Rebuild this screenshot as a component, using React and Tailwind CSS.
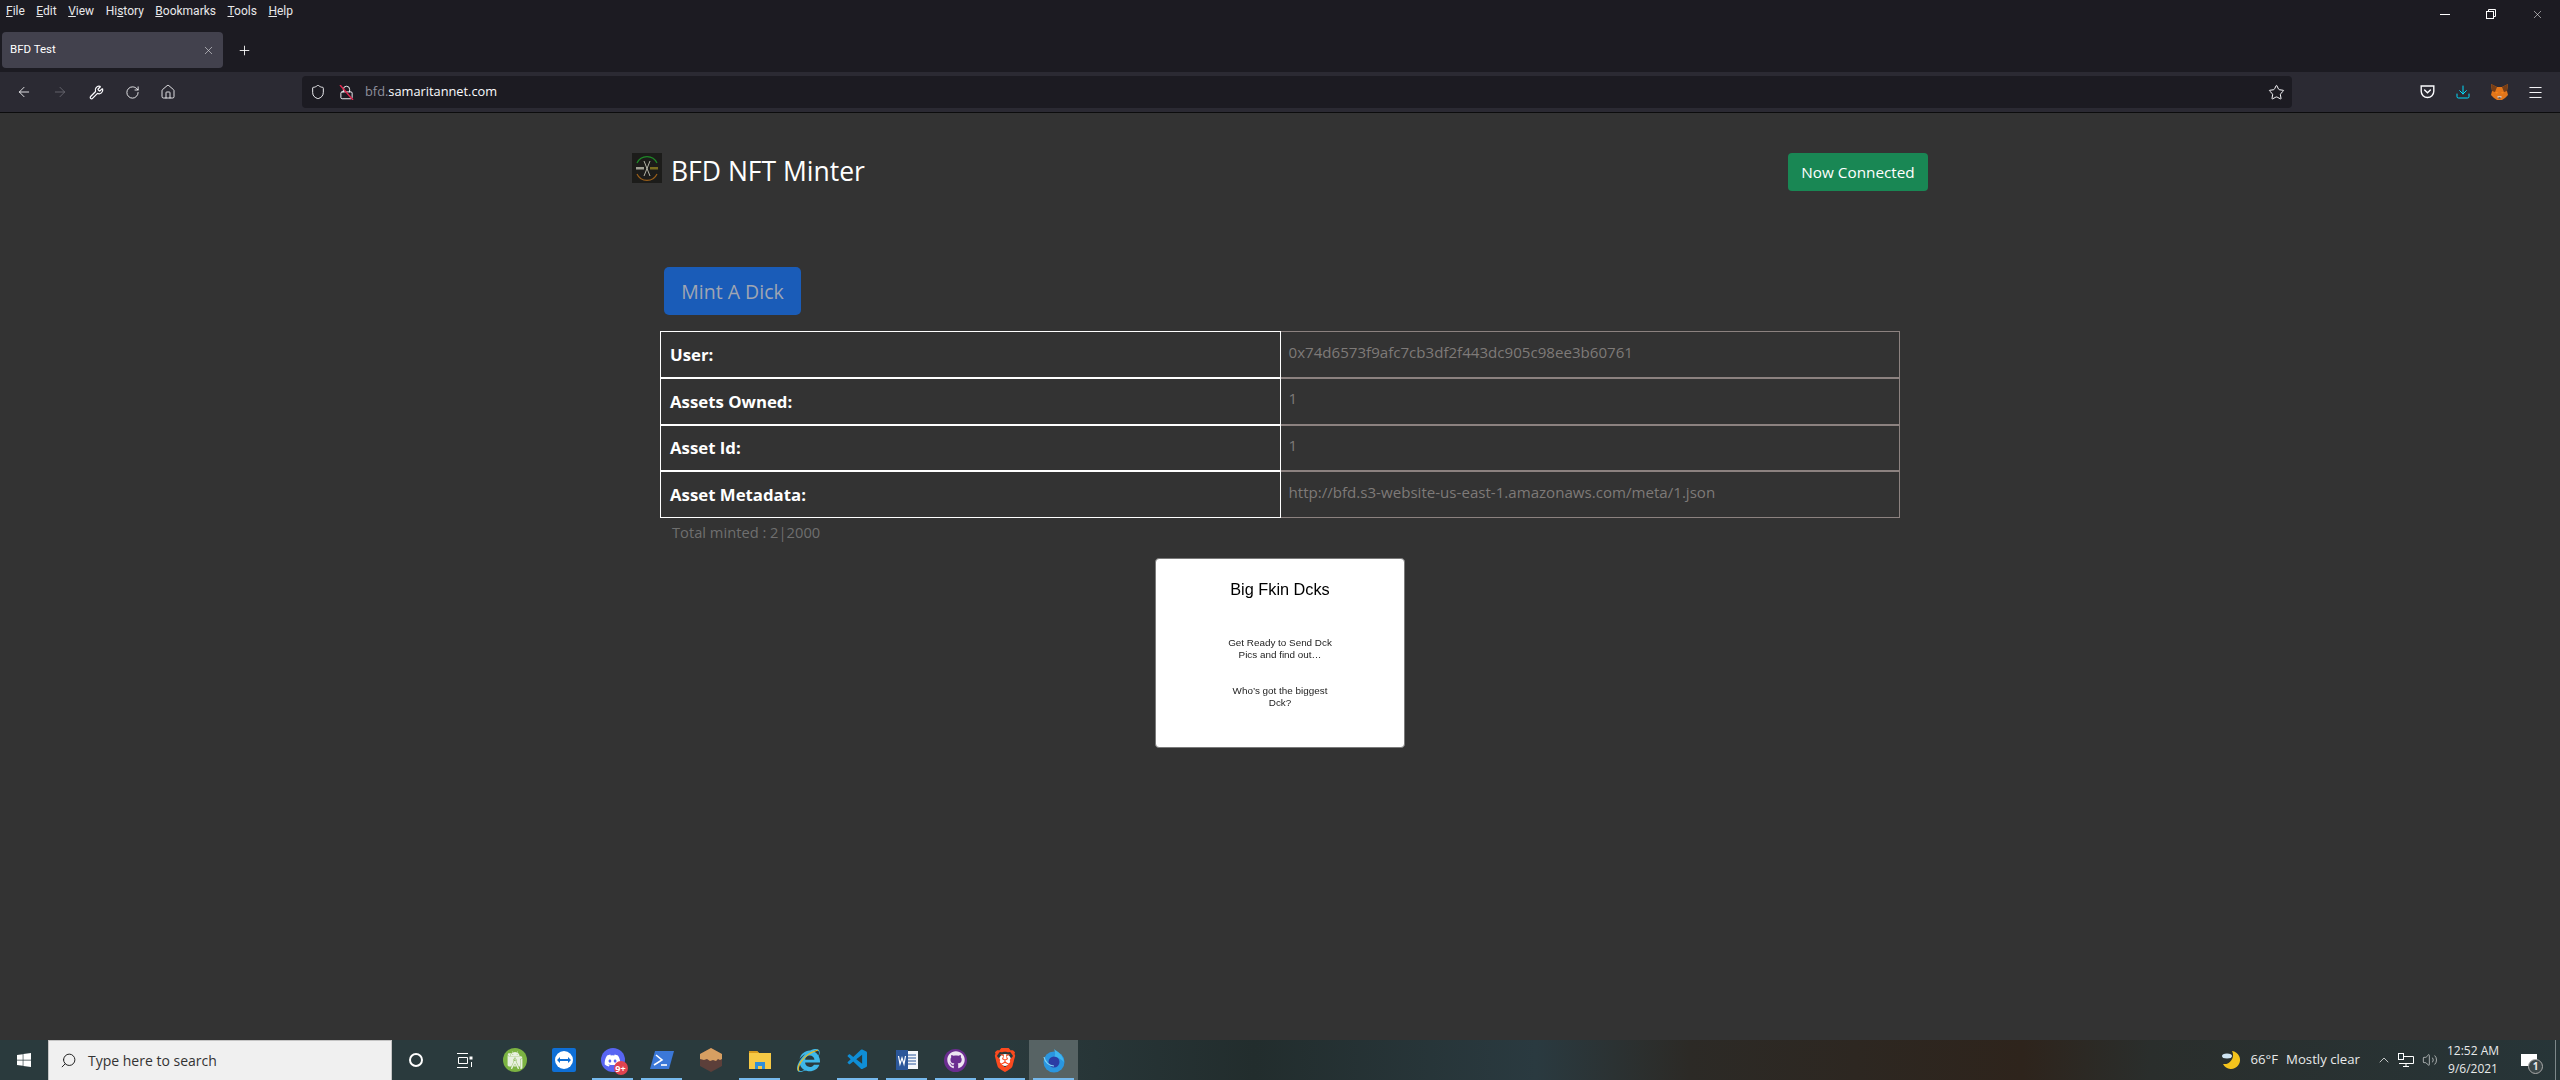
import { ArrowLeft, ArrowRight, Wrench, RotateCw, Home, Shield, Lock, Star, X, Plus, Menu, Search, ChevronUp, Volume2, Download } from 'lucide-react';
import { FaDiscord, FaGithub, FaWindows, FaInternetExplorer } from 'react-icons/fa';
import { SiAndroidstudio, SiBrave } from 'react-icons/si';
import { VscVscode } from 'react-icons/vsc';

const font = "font-['Open_Sans','Noto_Sans',sans-serif]";

const rows = [
  ['User:', '0x74d6573f9afc7cb3df2f443dc905c98ee3b60761'],
  ['Assets Owned:', '1'],
  ['Asset Id:', '1'],
  ['Asset Metadata:', 'http://bfd.s3-website-us-east-1.amazonaws.com/meta/1.json'],
];

const menus = [
  ['F', 'ile'],
  ['E', 'dit'],
  ['V', 'iew'],
  ['Hi', 's', 'tory'],
  ['B', 'ookmarks'],
  ['T', 'ools'],
  ['H', 'elp'],
];

const MenuLabel = ({ item }) => {
  if (item.length === 3) {
    return (
      <span>
        {item[0]}
        <span className="underline">{item[1]}</span>
        {item[2]}
      </span>
    );
  }
  return (
    <span>
      <span className="underline">{item[0]}</span>
      {item[1]}
    </span>
  );
};

const TitleBars = () => (
  <div className="bg-[#1c1b22] font-['Roboto',sans-serif] text-white">
    <div className="flex h-[25px] items-start justify-between">
      <div className="flex gap-[11.5px] pl-[6px] pt-[1px] text-[12px] leading-[20px] text-[#e8e8ea]">
        {menus.map((m) => (
          <MenuLabel key={m.join('')} item={m} />
        ))}
      </div>
      <div className="flex items-center pt-[4px]">
        <div className="flex h-[20px] w-[46px] items-center justify-center">
          <div className="h-px w-[10px] bg-white" />
        </div>
        <div className="flex h-[20px] w-[46px] items-center justify-center">
          <svg width="10" height="10" viewBox="0 0 10 10" fill="none" stroke="white">
            <rect x="0.5" y="2.5" width="7" height="7" />
            <path d="M2.5 2.5V.5h7v7h-2" />
          </svg>
        </div>
        <div className="flex h-[20px] w-[46px] items-center justify-center">
          <X size={13} strokeWidth={1} />
        </div>
      </div>
    </div>
    <div className="flex h-[47px] items-start pl-[2px] pt-[7px]">
      <div className="flex h-[36px] w-[221px] items-center justify-between rounded-[4px] bg-[#42414d] pl-[8px] pr-[8px] text-[11.5px]">
        <span>BFD Test</span>
        <X size={13} strokeWidth={1.2} className="text-[#d5d5d8]" />
      </div>
      <div className="flex h-[36px] w-[42px] items-center justify-center">
        <Plus size={15} strokeWidth={1.4} />
      </div>
    </div>
  </div>
);

const Toolbar = () => (
  <div className="flex h-[41px] items-center border-b border-[#0c0c0d] bg-[#2b2a33] text-[#fbfbfe]">
    <div className="flex w-[302px] shrink-0 items-center pl-[6px]">
      <div className="flex w-[36px] justify-center"><ArrowLeft size={16} strokeWidth={1.3} /></div>
      <div className="flex w-[36px] justify-center text-[#6b6b73]"><ArrowRight size={16} strokeWidth={1.3} /></div>
      <div className="flex w-[36px] justify-center"><Wrench size={15} strokeWidth={2} /></div>
      <div className="flex w-[36px] justify-center"><RotateCw size={15} strokeWidth={1.4} /></div>
      <div className="flex w-[36px] justify-center"><Home size={16} strokeWidth={1.3} /></div>
    </div>
    <div className="flex h-[32px] w-[1990px] shrink-0 items-center justify-between rounded-[4px] bg-[#1c1b22] pl-[8px] pr-[7px]">
      <div className="flex items-center">
        <Shield size={16} strokeWidth={1.4} />
        <div className="relative ml-[13px] flex">
          <Lock size={15} strokeWidth={1.5} />
          <svg className="absolute left-0 top-0" width="15" height="15" viewBox="0 0 15 15">
            <path d="M1 0l13 15" stroke="#e22850" strokeWidth="1.4" />
          </svg>
        </div>
        <span className="ml-[11px] text-[12.8px] text-[#8f8f9d]">
          bfd.<span className="text-[#fbfbfe]">samaritannet.com</span>
        </span>
      </div>
      <Star size={17} strokeWidth={1.4} />
    </div>
    <div className="flex flex-1 items-center justify-end pr-[7px]">
      <div className="flex w-[36px] justify-center">
        <svg width="15" height="14" viewBox="0 0 15 14" fill="none" stroke="#fbfbfe" strokeWidth="1.4">
          <path d="M1.2 1h12.6v5.2a6.3 6.3 0 0 1-12.6 0z" />
          <path d="M4.6 5l2.9 2.8L10.4 5" strokeLinecap="round" />
        </svg>
      </div>
      <div className="flex w-[36px] justify-center text-[#00ddff]"><Download size={16} strokeWidth={1.5} /></div>
      <div className="flex w-[36px] justify-center">
        <svg width="17" height="16" viewBox="0 0 17 16">
          <path d="M0 0l6 3h5l6-3-1 7 1 4-3 3-3 2-1 1H7l-1-1-3-2-3-3 1-4z" fill="#e2761b" />
          <path d="M0 0l6 3-2 5-3-1zM17 0l-6 3 2 5 3-1z" fill="#763d16" />
          <path d="M4 8h3l-1 2zM13 8h-3l1 2z" fill="#f6851b" />
          <path d="M6 13l2.500 2 2.500-2-1-1H7z" fill="#d7c1b3" />
          <path d="M7.500 13.500h2v1h-2z" fill="#161616" />
        </svg>
      </div>
      <div className="flex w-[36px] justify-center"><Menu size={17} strokeWidth={1.4} /></div>
    </div>
  </div>
);

const Logo = () => (
  <svg width="30" height="30" viewBox="0 0 30 30" className="mt-[1px] shrink-0">
    <rect width="30" height="30" fill="#1c1c1a" />
    <path d="M5 10a11 11 0 0 1 20 0" fill="none" stroke="#1f8a28" strokeWidth="1.2" />
    <path d="M5 21a11 11 0 0 0 20 0" fill="none" stroke="#9a5f1a" strokeWidth="1.2" />
    <path d="M12 8l6 15M18 8l-6 15" stroke="#c5c5b8" strokeWidth="0.9" />
    <rect x="4" y="14" width="8" height="2.500" fill="#a0a094" />
    <rect x="18" y="14" width="8" height="2.500" fill="#7a6d20" />
  </svg>
);

const Card = () => (
  <div className="mx-auto mt-[14px] flex h-[190px] w-[250px] flex-col items-center rounded-[4px] border border-[#7a7a7a] bg-white pt-[18px] text-center font-['Liberation_Sans',Arial,sans-serif] text-black blur-[0.3px]">
    <div className="text-[16.3px] leading-[24px]">Big Fkin Dcks</div>
    <div className="mt-[36px] w-[120px] text-[9.9px] leading-[12px] text-[#222]">Get Ready to Send Dck Pics and find out…</div>
    <div className="mt-[24px] w-[110px] text-[9.9px] leading-[12px] text-[#222]">Who’s got the biggest Dck?</div>
  </div>
);

const Page = () => (
  <div className={`h-[927px] bg-[#333333] ${font}`}>
    <div className="mx-auto w-[1320px]">
      <div className="flex items-start justify-between pl-[12px] pr-[12px] pt-[39px]">
        <div className="flex items-start gap-[9px]">
          <Logo />
          <h1 className="-mt-[1px] text-[26.5px] leading-[40px] text-white">BFD NFT Minter</h1>
        </div>
        <button className="mt-[1px] h-[38px] w-[140px] rounded-[4px] bg-[#198754] text-[15.3px] text-white">Now Connected</button>
      </div>
      <div className="pl-[40px] pr-[40px] pt-[76px]">
        <button className="ml-[4px] block h-[48px] w-[137px] rounded-[5px] bg-[#1a5cb8] pt-[2px] text-[19.5px] text-[#a0a6b2]">Mint A Dick</button>
        <table className="mt-[16px] w-[1240px] table-fixed border-collapse">
          <tbody>
            {rows.map(([label, value], i) => (
              <tr key={label} className="h-[46.5px]">
                <th className={`border border-white px-[9px] text-left text-[16.8px] font-bold text-white ${i < 3 ? 'border-b-2' : ''}`}>{label}</th>
                <td className={`border border-[#8c8280] px-[8px] pb-[5px] text-[15.1px] text-[#7e7a78] ${i < 3 ? 'border-b-2' : ''}`}>{value}</td>
              </tr>
            ))}
          </tbody>
        </table>
        <div className="pl-[12px] pt-[2px] text-[14.7px] leading-[24px] text-[#6f6f6f]">Total minted : 2|2000</div>
      </div>
      <Card />
    </div>
  </div>
);

const TaskIcon = ({ children, open, active }) => (
  <div className={`relative flex h-[40px] w-[49px] shrink-0 items-center justify-center ${active ? 'bg-[#576364]' : ''}`}>
    {children}
    {open && <div className="absolute bottom-0 left-[4px] right-[4px] h-[2px] bg-[#76b9ed]" />}
  </div>
);

const Taskbar = () => (
  <div className="flex h-[40px] items-center bg-[linear-gradient(90deg,#2a3a3d_0%,#2a3a3d_39%,#222d2d_49%,#2a3a40_60%,#2c2a26_66%,#2e241c_79%,#2a2e2c_84%,#273538_100%)] text-white">
    <div className="flex h-[40px] w-[48px] shrink-0 items-center justify-center">
      <FaWindows size={16} />
    </div>
    <div className={`flex h-[40px] w-[344px] shrink-0 items-center border-x border-t border-[#c4c4c4] bg-[#f0f0f0] pl-[11px] text-[14px] text-[#333] ${font}`}>
      <Search size={17} strokeWidth={1.4} className="-scale-x-100 text-[#222]" />
      <span className="ml-[11px]">Type here to search</span>
    </div>
    <div className="flex w-[48px] shrink-0 justify-center">
      <div className="h-[14px] w-[14px] rounded-full border-[2px] border-white" />
    </div>
    <div className="flex w-[50px] shrink-0 justify-center">
      <svg width="16" height="15" viewBox="0 0 16 15" fill="none" stroke="white">
        <path d="M0 .5h11M1.500 4.500h9v6h-9zM0 14.500h11" />
        <path d="M14 3.500v3" strokeWidth="3" />
        <path d="M14.500 9v5" />
      </svg>
    </div>
    <TaskIcon>
      <div className="flex h-[24px] w-[24px] items-center justify-center rounded-full bg-[#7cb342]">
        <SiAndroidstudio size={18} className="text-[#e8f0e0]" />
      </div>
    </TaskIcon>
    <TaskIcon>
      <div className="flex h-[24px] w-[24px] items-center justify-center rounded-[2px] bg-[#0e6fd6]">
        <div className="relative flex h-[18px] w-[18px] items-center justify-center rounded-full bg-white">
          <svg width="14" height="8" viewBox="0 0 14 8"><path d="M0 4l3-3v2h8V1l3 3-3 3V5H3v2z" fill="#0e6fd6" /></svg>
        </div>
      </div>
    </TaskIcon>
    <TaskIcon open>
      <div className="relative flex h-[24px] w-[24px] items-center justify-center rounded-full bg-[#5865f2]">
        <FaDiscord size={17} />
        <div className="absolute -bottom-[3px] -right-[3px] flex h-[14px] w-[14px] items-center justify-center rounded-full bg-[#e04350] text-[9px] font-bold leading-none">9+</div>
      </div>
    </TaskIcon>
    <TaskIcon open>
      <svg width="24" height="20" viewBox="0 0 24 20">
        <path d="M5 1h19l-5 18H0z" fill="#3b78d8" />
        <path d="M6 5l6 5-8 5" fill="none" stroke="white" strokeWidth="1.600" />
        <path d="M11 15h6" stroke="white" strokeWidth="1.600" />
      </svg>
    </TaskIcon>
    <TaskIcon>
      <svg width="22" height="24" viewBox="0 0 22 24">
        <path d="M11 0l11 6v12l-11 6-11-6V6z" fill="#5c3f3a" />
        <path d="M11 0l11 6v5l-2 1-2-1-2 2-3-1-3 1-3-2-3 1-4-1V6z" fill="#d79f62" />
      </svg>
    </TaskIcon>
    <TaskIcon open>
      <svg width="22" height="20" viewBox="0 0 22 20">
        <path d="M0 1h8l2 2h12v16H0z" fill="#f6c945" />
        <path d="M0 1h8l2 2H0z" fill="#d99c1e" />
        <path d="M6 12h10v7h-3v-3H9v3H6z" fill="#2f8fd8" />
      </svg>
    </TaskIcon>
    <TaskIcon>
      <div className="relative">
        <FaInternetExplorer size={23} className="text-[#3fb8e8]" />
        <svg className="absolute left-0 top-0" width="23" height="23" viewBox="0 0 23 23" fill="none">
          <path d="M2 22C-1 20 4 6 21 1" stroke="#e8b923" strokeWidth="1.300" />
        </svg>
      </div>
    </TaskIcon>
    <TaskIcon open>
      <VscVscode size={24} className="text-[#0f8ed6]" />
    </TaskIcon>
    <TaskIcon open>
      <svg width="22" height="20" viewBox="0 0 22 20">
        <rect x="8" y="1" width="14" height="18" fill="#f5f7fa" />
        <path d="M12 5h8M12 8h8M12 11h8M12 14h8" stroke="#2b579a" />
        <rect y="0" width="12" height="20" fill="#2b579a" />
        <path d="M2.500 6l1.500 8 2-6 2 6 1.500-8" fill="none" stroke="white" strokeWidth="1.200" />
      </svg>
    </TaskIcon>
    <TaskIcon open>
      <div className="flex h-[23px] w-[23px] items-center justify-center rounded-full bg-[#6b2d90]">
        <FaGithub size={18} className="text-[#ede4f2]" />
      </div>
    </TaskIcon>
    <TaskIcon open>
      <div className="relative flex items-center justify-center">
        <div className="absolute h-[12px] w-[12px] rounded-full bg-white" />
        <SiBrave size={24} className="relative text-[#fb4a1f]" />
      </div>
    </TaskIcon>
    <TaskIcon open active>
      <svg width="24" height="25" viewBox="0 0 24 25">
        <circle cx="12" cy="14" r="10.500" fill="#2a96e0" />
        <path d="M12 1c4 3 9 6 10 13-3-3-6-5-10-5 2-2 1-5 0-8z" fill="#3fb4ee" />
        <circle cx="12" cy="14" r="5.500" fill="#2b3da4" />
        <path d="M2 9c1 5 5 9 10 9" fill="none" stroke="#7fd0f5" strokeWidth="1.200" />
      </svg>
    </TaskIcon>
    <div className={`ml-auto flex h-[40px] items-center text-[#e8eaea] ${font}`}>
      <svg width="20" height="20" viewBox="0 0 20 20">
        <path d="M11 1a9 9 0 1 1-9 13 9 9 0 0 0 9-13z" fill="#f3c31c" />
        <ellipse cx="6" cy="6" rx="5" ry="2.500" fill="#cfe4f2" />
      </svg>
      <span className="ml-[10px] text-[13.2px]">66°F</span>
      <span className="ml-[8px] text-[13.2px]">Mostly clear</span>
      <ChevronUp size={16} strokeWidth={1.2} className="ml-[16px]" />
      <svg width="16" height="14" viewBox="0 0 16 14" fill="none" stroke="white" className="ml-[6px]">
        <path d="M4 3.500h11.500v7H1M8 10.500v3M5 13.500h6" />
        <rect x="0.500" y="0.500" width="5" height="6" fill="#273538" />
      </svg>
      <Volume2 size={16} strokeWidth={1} className="ml-[8px]" />
      <div className="ml-[9px] flex w-[52px] flex-col items-center text-[12px] leading-[18px]">
        <span className="whitespace-nowrap">12:52 AM</span>
        <span>9/6/2021</span>
      </div>
      <div className="relative ml-[20px] mr-[16px] flex h-[40px] w-[20px] items-center justify-center">
        <div className="h-[12px] w-[16px] bg-white" />
        <div className="absolute bottom-[6px] -right-[4px] flex h-[15px] w-[15px] items-center justify-center rounded-full border border-[#aaa] bg-[#3b4648] text-[10px] font-bold">1</div>
      </div>
      <div className="h-[40px] w-[1px] bg-[#7d8789]" />
      <div className="w-[4px]" />
    </div>
  </div>
);

export default function App() {
  return (
    <div className={`h-[1080px] w-[2560px] overflow-hidden ${font}`}>
      <TitleBars />
      <Toolbar />
      <Page />
      <Taskbar />
    </div>
  );
}
